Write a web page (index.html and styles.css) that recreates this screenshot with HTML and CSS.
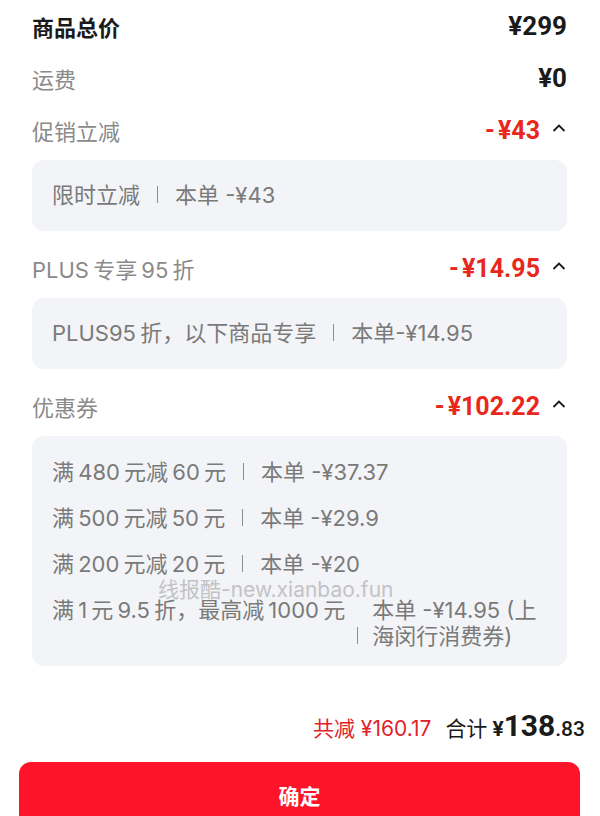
FILE: index.html
```html
<!DOCTYPE html>
<html lang="zh-CN">
<head>
    <meta charset="UTF-8">
    <meta name="viewport" content="width=device-width, initial-scale=1.0">
    <title>订单金额明细</title>
    <link rel="stylesheet" href="styles.css">
</head>
<body>

    <div class="price-detail">
        <div class="row">
            <span class="label label-main">商品总价</span>
            <span class="value">¥299</span>
        </div>
        <div class="row">
            <span class="label">运费</span>
            <span class="value">¥0</span>
        </div>

        <div class="row">
            <span class="label">促销立减</span>
            <span class="value-wrap">
                <span class="value red"><span class="minus">-</span>¥43</span>
                <svg class="caret" width="14" height="8" viewBox="0 0 14 8"><polyline points="1.5,7 7,1.5 12.5,7" fill="none" stroke="#1a1a1a" stroke-width="1.8"/></svg>
            </span>
        </div>
        <div class="card">
            <div class="item">
                <span class="item-name">限时立减</span>
                <span class="sep"></span>
                <span class="item-amount">本单 -¥43</span>
            </div>
        </div>

        <div class="row">
            <span class="label">PLUS 专享 95 折</span>
            <span class="value-wrap">
                <span class="value red"><span class="minus">-</span>¥14.95</span>
                <svg class="caret" width="14" height="8" viewBox="0 0 14 8"><polyline points="1.5,7 7,1.5 12.5,7" fill="none" stroke="#1a1a1a" stroke-width="1.8"/></svg>
            </span>
        </div>
        <div class="card">
            <div class="item">
                <span class="item-name">PLUS95 折，以下商品专享</span>
                <span class="sep"></span>
                <span class="item-amount">本单-¥14.95</span>
            </div>
        </div>

        <div class="row">
            <span class="label">优惠券</span>
            <span class="value-wrap">
                <span class="value red"><span class="minus">-</span>¥102.22</span>
                <svg class="caret" width="14" height="8" viewBox="0 0 14 8"><polyline points="1.5,7 7,1.5 12.5,7" fill="none" stroke="#1a1a1a" stroke-width="1.8"/></svg>
            </span>
        </div>
        <div class="card card-coupons">
            <div class="item">
                <span class="item-name">满 480 元减 60 元</span>
                <span class="sep"></span>
                <span class="item-amount">本单 -¥37.37</span>
            </div>
            <div class="item">
                <span class="item-name">满 500 元减 50 元</span>
                <span class="sep"></span>
                <span class="item-amount">本单 -¥29.9</span>
            </div>
            <div class="item">
                <span class="item-name">满 200 元减 20 元</span>
                <span class="sep"></span>
                <span class="item-amount">本单 -¥20</span>
            </div>
            <div class="item">
                <span class="item-name">满 1 元 9.5 折，最高减 1000 元</span>
                <span class="sep sep-tight"></span>
                <span class="item-amount">本单 -¥14.95 (上海闵行消费券)</span>
            </div>
            <div class="watermark">线报酷-new.xianbao.fun</div>
        </div>
    </div>

    <div class="footer">
        <div class="total">
            <span class="saved">共减 ¥160.17</span>
            <span class="sum-label">合计</span>
            <span class="sum"><span class="sum-yen">¥</span><span class="sum-int">138</span><span class="sum-dec">.83</span></span>
        </div>
        <button class="confirm">确定</button>
    </div>

</body>
</html>
```

FILE: styles.css
```css
html, body {
    height: 816px;
    overflow: hidden;
}
body {
    margin: 0;
    padding: 0;
    background-color: #fff;
    font-family: Inter, "Noto Sans CJK SC", sans-serif;
    color: #1a1a1a;
}
.price-detail {
    padding: 0 33px 0 32px;
}
.row {
    height: 52px;
    display: flex;
    justify-content: space-between;
    align-items: center;
}
.label {
    font-size: 22px;
    color: #8a8a8a;
    word-spacing: -2px;
}
.label-main {
    color: #1a1a1a;
    font-weight: bold;
}
.value {
    font-family: Roboto, "Noto Sans CJK SC", sans-serif;
    font-size: 26px;
    font-weight: bold;
    color: #1a1a1a;
}
.value.red {
    font-size: 25px;
    color: #e8281c;
}
.minus {
    margin-right: 3px;
}
.value-wrap {
    display: flex;
    align-items: center;
    gap: 12px;
}
.caret {
    margin-top: -4px;
    margin-right: 1px;
}
.card {
    position: relative;
    background-color: #f3f4f7;
    border-radius: 12px;
    margin: 4px 0 11px;
    padding: 22px 20px 23px;
    display: flex;
    flex-direction: column;
    gap: 20px;
}
.card-coupons {
    padding-top: 23px;
    padding-bottom: 17px;
}
.item {
    display: flex;
    align-items: flex-start;
    font-size: 22px;
    line-height: 26px;
    color: #7a7a7a;
}
.item-name {
    flex: none;
    white-space: nowrap;
    word-spacing: -2px;
}
.sep {
    flex: none;
    align-self: flex-end;
    width: 1px;
    height: 17px;
    margin: 0 17px 5px;
    background-color: #8e8e8e;
}
.sep-tight {
    margin: 0 14px 5px 12px;
}
.item-amount {
    flex: 1;
}
.watermark {
    position: absolute;
    left: 126px;
    top: 141px;
    font-size: 21px;
    line-height: 26px;
    color: #c3c3c6;
    white-space: nowrap;
}
.footer {
    padding-top: 31px;
}
.total {
    display: flex;
    justify-content: flex-end;
    align-items: baseline;
    padding-right: 15px;
    height: 30px;
}
.saved {
    font-size: 21px;
    color: #e0232b;
}
.sum-label {
    font-size: 21px;
    color: #1a1a1a;
    margin-left: 14px;
}
.sum {
    margin-left: 5px;
    font-family: Roboto, sans-serif;
    font-weight: bold;
    color: #1a1a1a;
}
.sum-yen {
    font-size: 21px;
}
.sum-int {
    font-size: 30px;
}
.sum-dec {
    font-size: 21px;
    font-weight: 500;
}
.confirm {
    display: block;
    width: 561px;
    height: 66px;
    margin: 24px 0 0 19px;
    padding-bottom: 2px;
    border: none;
    border-radius: 12px;
    background-color: #fd1428;
    color: #fff;
    font-family: "Noto Sans CJK SC", sans-serif;
    font-size: 21px;
    font-weight: bold;
}
```
